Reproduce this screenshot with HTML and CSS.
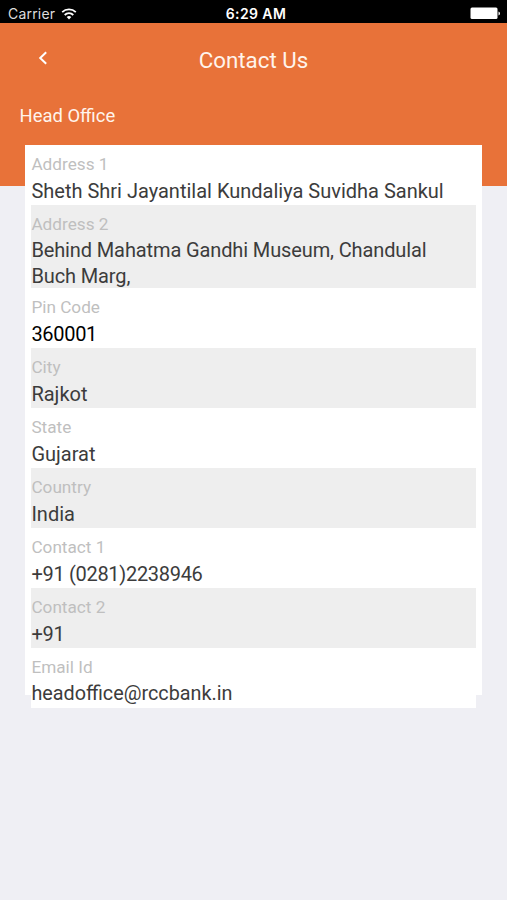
FILE: index.html
```html
<!DOCTYPE html>
<html lang="en">

<head>
  <meta charset="UTF-8">
  <meta name="viewport" content="width=device-width, initial-scale=1.0">
  <title>Contact Us</title>
  <link rel="stylesheet" href="styles.css">
</head>

<body>
  <div class="status-bar">
    <div class="carrier">
      Carrier
      <svg viewBox="0 0 16 12" width="16" height="12" fill="none" stroke="#fff" stroke-width="1.8">
        <path d="M1.2 4.2a9.8 9.8 0 0 1 13.6 0" />
        <path d="M3.7 7a6 6 0 0 1 8.6 0" />
        <path d="M8 11.5L5.7 9.1a3.4 3.4 0 0 1 4.6 0z" fill="#fff" stroke="none" />
      </svg>
    </div>
    <div class="time">6:29 AM</div>
    <div class="battery">
      <svg viewBox="0 0 32 13" width="32" height="13">
        <rect x="1.5" y="0.5" width="27" height="11.5" rx="1.5" fill="#fff" />
        <path d="M29.5 4.5v4q1.5-.5 1.5-2t-1.5-2z" fill="#fff" />
      </svg>
    </div>
  </div>

  <header>
    <div class="nav">
      <svg class="back" viewBox="0 0 10 14" width="10" height="14" fill="none" stroke="#fff" stroke-width="2">
        <path d="M8.2 1.2L2.2 7l6 5.8" />
      </svg>
      <h1>Contact Us</h1>
    </div>
    <h2>Head Office</h2>
  </header>

  <main>
    <div class="card">
      <div class="row">
        <label>Address 1</label>
        <p>Sheth Shri Jayantilal Kundaliya Suvidha Sankul</p>
      </div>
      <div class="row tall">
        <label>Address 2</label>
        <p>Behind Mahatma Gandhi Museum, Chandulal Buch Marg,</p>
      </div>
      <div class="row">
        <label>Pin Code</label>
        <p class="number pin">360001</p>
      </div>
      <div class="row">
        <label>City</label>
        <p>Rajkot</p>
      </div>
      <div class="row">
        <label>State</label>
        <p>Gujarat</p>
      </div>
      <div class="row">
        <label>Country</label>
        <p>India</p>
      </div>
      <div class="row">
        <label>Contact 1</label>
        <p class="number">+91 (0281)2238946</p>
      </div>
      <div class="row">
        <label>Contact 2</label>
        <p class="number">+91</p>
      </div>
      <div class="row">
        <label>Email Id</label>
        <p class="email">headoffice@rccbank.in</p>
      </div>
    </div>
  </main>
</body>

</html>
```
FILE: styles.css
```css
body {
  margin: 0;
  height: 900px;
  overflow: hidden;
  background: #efeff4;
  font-family: Roboto, sans-serif;
  color: #3c3c3c;
}

.status-bar {
  display: grid;
  grid-template-columns: 1fr auto 1fr;
  align-items: center;
  height: 23px;
  padding: 4px 6px 0 8px;
  box-sizing: border-box;
  background: #000;
  color: #fff;
  font-family: Inter, sans-serif;
  font-size: 14px;
}

.carrier {
  display: flex;
  align-items: center;
  gap: 6px;
  color: #ddd;
  letter-spacing: 0.2px;
}

.time {
  padding-left: 3px;
  font-weight: 600;
  letter-spacing: 0.4px;
}

.battery {
  display: flex;
  justify-content: flex-end;
}

header {
  height: 162.5px;
  background: #e87239;
  color: #fff4ec;
}

.nav {
  display: grid;
  grid-template-columns: 60px 1fr 60px;
  align-items: center;
  height: 74px;
}

.back {
  margin: -4px 0 0 38px;
}

h1 {
  margin: 0;
  font-size: 22.3px;
  font-weight: 400;
  text-align: center;
}

h2 {
  margin: 8px 0 0 19.6px;
  font-size: 18.4px;
  line-height: 22px;
  font-weight: 400;
}

/* the last row runs past the bottom of the card */
.card {
  width: 445px;
  height: 550px;
  margin: -40.5px 0 0 25.4px;
  padding: 0 6px;
  background: #fff;
}

.row {
  height: 60px;
  padding: 7px 6px 0 0;
  box-sizing: border-box;
  background: #fff;
}

.row.tall {
  height: 83px;
}

.row:nth-child(even) {
  background: #eee;
}

.row label {
  display: block;
  font-size: 17.2px;
  line-height: 25px;
  color: #bfbfbf;
}

.row p {
  margin: 0;
  font-size: 20px;
  line-height: 28px;
}

.row.tall p {
  line-height: 26px;
  letter-spacing: -0.12px;
}

.row .number {
  letter-spacing: -0.3px;
}

.row .email {
  font-size: 19.8px;
}

.row .pin {
  color: #000;
}
```
